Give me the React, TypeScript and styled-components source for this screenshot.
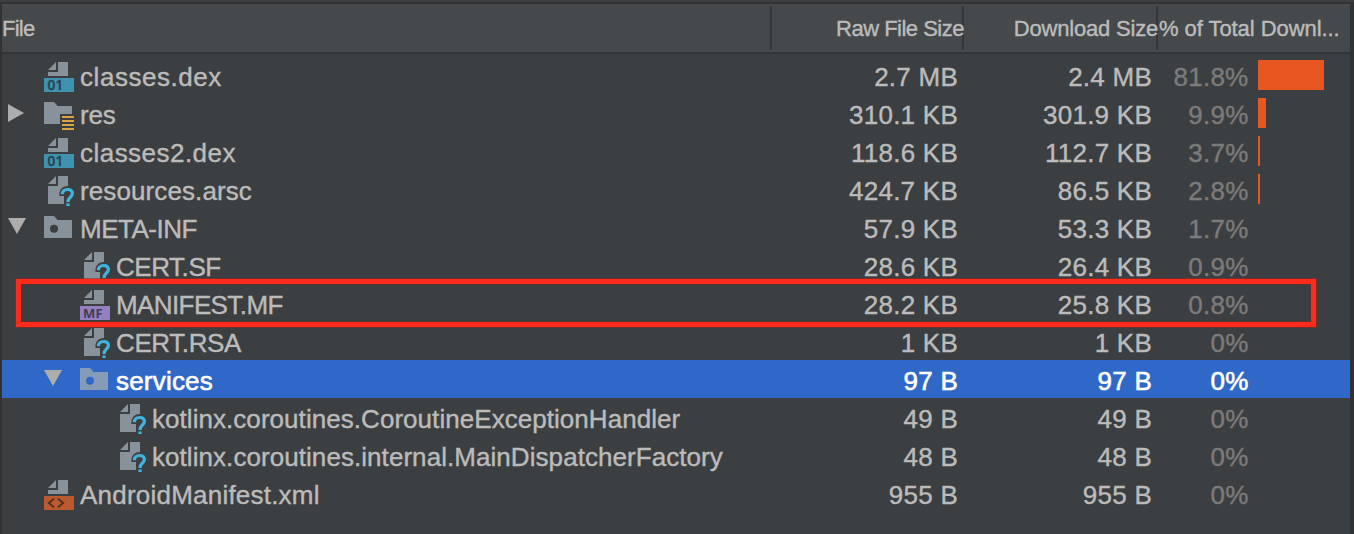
import React from 'react';
import styled, { createGlobalStyle } from 'styled-components';

const GlobalStyle = createGlobalStyle`
  html, body { margin: 0; padding: 0; background: #3c3f41; overflow: hidden; }
`;

const Panel = styled.main`
  position: relative;
  box-sizing: border-box;
  width: 1354px;
  height: 534px;
  padding-top: 2px;
  background: #3c3f41;
  color: #bbbbbb;
  font-family: 'Liberation Sans', Arial, sans-serif;
  -webkit-text-stroke: 0.4px currentColor;
  overflow: hidden;
`;

const Frame = styled.div`
  box-sizing: border-box;
  height: 532px;
  border: solid #323232;
  border-width: 2px 4px 0 2px;
`;

const COLUMNS = '770px 192px 194px 1fr';

const HeaderRow = styled.div`
  display: grid;
  grid-template-columns: ${COLUMNS};
  box-sizing: border-box;
  height: 50px;
  padding: 2px 0;
  background: #45494b;
  border-bottom: 2px solid #323537;
`;

const HeaderCell = styled.div<{ $align?: string; $track: number; $last?: boolean }>`
  box-sizing: border-box;
  height: 44px;
  padding-top: 2px;
  font-size: 22px;
  line-height: 42px;
  white-space: pre;
  text-align: ${p => p.$align || 'left'};
  letter-spacing: ${p => p.$track}px;
  box-shadow: ${p => (p.$last ? 'none' : 'inset -2px 0 #35383a')};
  padding-left: ${p => (p.$last ? 1 : 0)}px;
`;

const Body = styled.div`
  padding-top: 2px;
`;

const Row = styled.div<{ $selected?: boolean }>`
  display: grid;
  grid-template-columns: ${COLUMNS};
  height: 38px;
  font-size: 26px;
  color: ${p => (p.$selected ? '#ffffff' : 'inherit')};
  background: ${p => (p.$selected ? '#3068c8' : 'transparent')};
  -webkit-text-stroke: ${p => (p.$selected ? '0.6px' : '0.4px')} currentColor;
`;

const FileCell = styled.div<{ $level: number }>`
  display: flex;
  align-items: flex-start;
  padding-left: ${p => p.$level * 36}px;
`;

const Toggle = styled.svg`
  flex: none;
  width: 40px;
  height: 38px;
  fill: #adadad;
`;

const Glyph = styled.svg`
  flex: none;
  width: 32px;
  height: 32px;
  margin: 4px 6px 0 0;
  overflow: visible;
  -webkit-text-stroke: 0;
`;

const Label = styled.span<{ $track: number }>`
  padding-top: 4px;
  line-height: 34px;
  white-space: pre;
  letter-spacing: ${p => p.$track}px;
`;

const SizeCell = styled.div`
  padding: 4px 6px 0 0;
  line-height: 34px;
  text-align: right;
  letter-spacing: 0.25px;
`;

const ShareCell = styled.div`
  display: flex;
  gap: 9.5px;
`;

const Share = styled.span<{ $selected?: boolean }>`
  width: 90.5px;
  padding-top: 4px;
  line-height: 34px;
  text-align: right;
  letter-spacing: 0.25px;
  color: ${p => (p.$selected ? '#ffffff' : '#7b7b7b')};
`;

const Bar = styled.span<{ $width: number }>`
  width: ${p => p.$width}px;
  height: 30px;
  margin-top: 4px;
  background: #e75620;
`;

const Highlight = styled.div`
  position: absolute;
  left: 16px;
  top: 279px;
  width: 1300px;
  height: 48px;
  box-sizing: border-box;
  border: 5px solid #fe2b1c;
  box-shadow: 0 0 0 1px rgba(150, 40, 32, 0.6), inset 0 0 0 1px rgba(120, 40, 36, 0.45);
`;

type Kind = 'dex' | 'res' | 'unknown' | 'package' | 'mf' | 'xml';

const DOC = '#87929a';

const Fold = () => <path d="M6 10L14 2V10Z" fill={DOC} />;

const TAG_COLORS = { dex: '#3f92b0', mf: '#9480c1', xml: '#bb5a2e' };

function Icon({ kind, selected }: { kind: Kind; selected?: boolean }) {
  if (kind === 'package' || kind === 'res') {
    return (
      <Glyph viewBox="0 0 32 32">
        {kind === 'package' ? (
          <path
            fillRule="evenodd"
            fill={selected ? '#859bb8' : DOC}
            d="M2 4H11.2Q12.3 4 13.2 5.2L15.5 8H30V26H2ZM12 12.8A4 4 0 1 0 12 20.8A4 4 0 1 0 12 12.8Z"
          />
        ) : (
          <>
            <path fill={DOC} d="M2 4H11.2Q12.3 4 13.2 5.2L15.5 8H30V16H18V26H2Z" />
            <path fill="#dca344" d="M20 18H32V20H20ZM20 22H32V24H20ZM20 26H32V28H20ZM20 30H32V32H20Z" />
          </>
        )}
      </Glyph>
    );
  }
  if (kind === 'unknown') {
    return (
      <Glyph viewBox="0 0 32 32">
        <Fold />
        <path fill={DOC} d="M16 2H26V12C21 12 17.4 15 17.4 20.6V22H22V30H6V12H16Z" />
        <path d="M20.4 20.2C20.4 17.3 22.5 15.5 25.6 15.5C28.6 15.5 30.4 17.2 30.4 19.6C30.4 23.2 26 23 26 28" fill="none" stroke="#41b3dd" strokeWidth="3.2" />
        <rect x="24.4" y="29.4" width="3.2" height="2.6" fill="#41b3dd" />
      </Glyph>
    );
  }
  return (
    <Glyph viewBox="0 0 32 32">
      <Fold />
      <path fill={DOC} d="M16 2H26V16H6V12H16Z" />
      <rect x="2" y="18" width="30" height="14" fill={TAG_COLORS[kind]} />
      {kind === 'dex' && (
        <text x="5.4" y="29.9" fontFamily="Noto Sans" fontSize="13.6" fontWeight="500" fill="#2b4350" stroke="#2b4350" strokeWidth="0.5" letterSpacing="0.3">01</text>
      )}
      {kind === 'mf' && (
        <text x="5" y="29.8" fontFamily="Noto Sans" fontSize="13" fontWeight="700" fill="#443c55" letterSpacing="0.2">MF</text>
      )}
      {kind === 'xml' && (
        <path d="M12 20.8L6.8 25L12 29.2M16 20.8L21.2 25L16 29.2" fill="none" stroke="#512f22" strokeWidth="1.8" />
      )}
    </Glyph>
  );
}

interface Entry {
  name: string;
  level: number;
  kind: Kind;
  raw: string;
  download: string;
  share: string;
  track: number;
  toggle?: 'open' | 'closed';
  bar?: number;
  selected?: boolean;
}

const ENTRIES: Entry[] = [
  { name: 'classes.dex', level: 0, kind: 'dex', raw: '2.7 MB', download: '2.4 MB', share: '81.8%', track: 0.55, bar: 66 },
  { name: 'res', level: 0, kind: 'res', raw: '310.1 KB', download: '301.9 KB', share: '9.9%', track: -0.2, toggle: 'closed', bar: 8 },
  { name: 'classes2.dex', level: 0, kind: 'dex', raw: '118.6 KB', download: '112.7 KB', share: '3.7%', track: 0.47, bar: 2 },
  { name: 'resources.arsc', level: 0, kind: 'unknown', raw: '424.7 KB', download: '86.5 KB', share: '2.8%', track: 0.1, bar: 2 },
  { name: 'META-INF', level: 0, kind: 'package', raw: '57.9 KB', download: '53.3 KB', share: '1.7%', track: -0.5, toggle: 'open' },
  { name: 'CERT.SF', level: 1, kind: 'unknown', raw: '28.6 KB', download: '26.4 KB', share: '0.9%', track: -0.45 },
  { name: 'MANIFEST.MF', level: 1, kind: 'mf', raw: '28.2 KB', download: '25.8 KB', share: '0.8%', track: -0.6 },
  { name: 'CERT.RSA', level: 1, kind: 'unknown', raw: '1 KB', download: '1 KB', share: '0%', track: -0.4 },
  { name: 'services', level: 1, kind: 'package', raw: '97 B', download: '97 B', share: '0%', track: 0.2, toggle: 'open', selected: true },
  { name: 'kotlinx.coroutines.CoroutineExceptionHandler', level: 2, kind: 'unknown', raw: '49 B', download: '49 B', share: '0%', track: 0.05 },
  { name: 'kotlinx.coroutines.internal.MainDispatcherFactory', level: 2, kind: 'unknown', raw: '48 B', download: '48 B', share: '0%', track: 0.06 },
  { name: 'AndroidManifest.xml', level: 0, kind: 'xml', raw: '955 B', download: '955 B', share: '0%', track: 0.22 },
];

export default function App() {
  return (
    <>
      <GlobalStyle />
      <Panel>
        <Frame>
          <HeaderRow>
            <HeaderCell $track={-0.75}>File</HeaderCell>
            <HeaderCell $align="right" $track={-0.5}>Raw File Size</HeaderCell>
            <HeaderCell $align="right" $track={-0.2}>Download Size</HeaderCell>
            <HeaderCell $track={-0.06} $last>% of Total Downl...</HeaderCell>
          </HeaderRow>
          <Body>
            {ENTRIES.map(e => (
              <Row key={e.name} $selected={e.selected}>
                <FileCell $level={e.level}>
                  <Toggle viewBox="0 0 40 38">
                    {e.toggle === 'closed' && <path d="M6 10L22 19L6 28Z" />}
                    {e.toggle === 'open' && <path d="M6 10H24L15 26Z" />}
                  </Toggle>
                  <Icon kind={e.kind} selected={e.selected} />
                  <Label $track={e.track}>{e.name}</Label>
                </FileCell>
                <SizeCell>{e.raw}</SizeCell>
                <SizeCell>{e.download}</SizeCell>
                <ShareCell>
                  <Share $selected={e.selected}>{e.share}</Share>
                  {e.bar && <Bar $width={e.bar} />}
                </ShareCell>
              </Row>
            ))}
          </Body>
        </Frame>
        <Highlight />
      </Panel>
    </>
  );
}
